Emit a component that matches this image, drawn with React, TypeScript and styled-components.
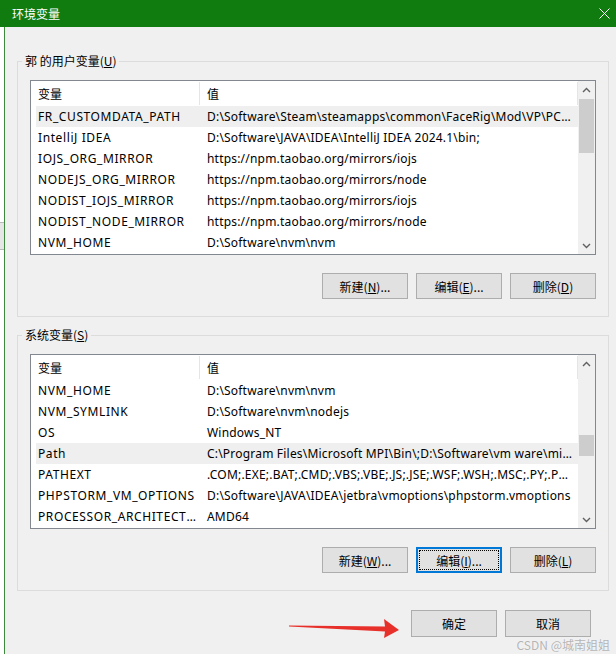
import styled, { createGlobalStyle } from "styled-components";

const GlobalStyle = createGlobalStyle`
	html, body {
		margin: 0;
		background: #ffffff;
	}
	body {
		font-family: "Noto Sans", "Noto Sans CJK SC", sans-serif;
		font-size: 12px;
		color: #000;
	}
`

const Page = styled.div`
	position: relative;
	display: flex;
	flex-direction: column;
	width: 616px;
	height: 654px;
	overflow: hidden;
`
const TitleBar = styled.div`
	flex: none;
	height: 27px;
	display: flex;
	align-items: center;
	justify-content: space-between;
	padding: 0 6px 0 12px;
	background: #107c10;
	color: #fff;
	font-family: "Noto Sans CJK SC", sans-serif;
	font-size: 12px;
`
const Main = styled.div`
	flex: 1;
	display: flex;
	min-height: 0;
	min-width: 0;
`
const Desktop = styled.div`
	flex: none;
	width: 4px;
	display: flex;
	flex-direction: column;
	padding-top: 195px;
`
const DesktopTab = styled.div`
	height: 26px;
	background: #e6e6e6;
	border-top: 1px solid #b9b9b9;
	border-bottom: 1px solid #b9b9b9;
`
const Body = styled.div`
	flex: 1;
	min-width: 0;
	display: flex;
	flex-direction: column;
	border-left: 1px solid #3d8a3d;
	background: #f0f0f0;
	padding: 26px 7px 0 12px;
`
const Group = styled.fieldset<{ $gap?: number }>`
	margin: ${p => p.$gap ?? 0}px 0 0 0;
	padding: 11px 12px 17px 12px;
	border: 1px solid #dcdcdc;
	min-width: 0;
	display: flex;
	flex-direction: column;
`
const Legend = styled.legend`
	padding: 0 3px;
	margin-left: -8px;
	line-height: 16px;
	font-family: "Noto Sans CJK SC", sans-serif;
	font-size: 12px;
`
const ListBox = styled.div`
	height: 175px;
	box-sizing: border-box;
	border: 1px solid #828790;
	background: #fff;
	display: flex;
	min-width: 0;
`
const Table = styled.div`
	flex: 1;
	min-width: 0;
	display: flex;
	flex-direction: column;
`
const HeadRow = styled.div`
	height: 25px;
	display: flex;
	padding-left: 5px;
	flex: none;
`
const HeadCell = styled.div<{ $w?: number; $pad: number }>`
	${p => p.$w ? `width: ${p.$w}px; flex: none;` : 'flex: 1;'}
	box-sizing: border-box;
	padding-left: ${p => p.$pad}px;
	margin: 1px 0 1px 0;
	border-right: 1px solid #e5e5e5;
	display: flex;
	align-items: center;
	font-family: "Noto Sans CJK SC", sans-serif;
`
const Row = styled.div<{ $sel?: boolean }>`
	height: 21px;
	flex: none;
	display: flex;
	align-items: center;
	margin-left: 5px;
	background: ${p => p.$sel ? '#efefef' : 'transparent'};
	white-space: nowrap;
`
const NameCell = styled.div`
	width: 164px;
	flex: none;
	box-sizing: border-box;
	padding: 0 2px 0 2px;
	letter-spacing: 0.6px;
	overflow: hidden;
	text-overflow: ellipsis;
`
const ValueCell = styled.div`
	flex: 1;
	min-width: 0;
	padding: 0 4px 0 7px;
	letter-spacing: 0.2px;
	overflow: hidden;
	text-overflow: ellipsis;
`
const ScrollBar = styled.div`
	width: 17px;
	flex: none;
	background: #f0f0f0;
	display: flex;
	flex-direction: column;
`
const ScrollArrow = styled.div`
	height: 17px;
	flex: none;
	display: flex;
	align-items: center;
	justify-content: center;
`
const Track = styled.div`
	flex: 1;
`
const Thumb = styled.div`
	margin: 0 1px;
	background: #cdcdcd;
`
const ButtonRow = styled.div<{ $top: number; $right?: number }>`
	display: flex;
	justify-content: flex-end;
	gap: 8px;
	margin-top: ${p => p.$top}px;
	margin-right: ${p => p.$right ?? 0}px;
`
const Button = styled.button<{ $h?: number; $focus?: boolean }>`
	width: 86px;
	height: ${p => p.$h ?? 26}px;
	box-sizing: border-box;
	padding: 0;
	background: #e1e1e1;
	border: 1px solid ${p => p.$focus ? '#0078d7' : '#adadad'};
	box-shadow: ${p => p.$focus ? 'inset 0 0 0 1px #0078d7' : 'none'};
	font-family: "Noto Sans CJK SC", sans-serif;
	font-size: 12px;
	color: #000;
	display: flex;
	align-items: center;
	justify-content: center;
`
const FocusRing = styled.span`
	flex: 1;
	align-self: stretch;
	margin: 2px;
	outline: 1px dotted #000;
	outline-offset: -1px;
	display: flex;
	align-items: center;
	justify-content: center;
`
const Arrow = styled.svg`
	position: absolute;
	left: 289px;
	top: 617px;
`
const Watermark = styled.div`
	position: absolute;
	right: 6px;
	bottom: 1px;
	font-family: "Noto Sans CJK SC", sans-serif;
	font-size: 12px;
	color: #b4b4b4;
	text-shadow: 0 0 1px #fff;
`

const Chevron = ({ up }: { up?: boolean }) => (
	<svg width="9" height="6" viewBox="0 0 9 6">
		<polyline
			points={up ? "1,5 4.5,1.5 8,5" : "1,1 4.5,4.5 8,1"}
			fill="none"
			stroke="#606060"
			strokeWidth="1.4"
		/>
	</svg>
)

const userVars = [
	['FR_CUSTOMDATA_PATH', 'D:\\Software\\Steam\\steamapps\\common\\FaceRig\\Mod\\VP\\PC_CustomData'],
	['IntelliJ IDEA', 'D:\\Software\\JAVA\\IDEA\\IntelliJ IDEA 2024.1\\bin;'],
	['IOJS_ORG_MIRROR', 'https://npm.taobao.org/mirrors/iojs'],
	['NODEJS_ORG_MIRROR', 'https://npm.taobao.org/mirrors/node'],
	['NODIST_IOJS_MIRROR', 'https://npm.taobao.org/mirrors/iojs'],
	['NODIST_NODE_MIRROR', 'https://npm.taobao.org/mirrors/node'],
	['NVM_HOME', 'D:\\Software\\nvm\\nvm'],
]

const sysVars = [
	['NVM_HOME', 'D:\\Software\\nvm\\nvm'],
	['NVM_SYMLINK', 'D:\\Software\\nvm\\nodejs'],
	['OS', 'Windows_NT'],
	['Path', 'C:\\Program Files\\Microsoft MPI\\Bin\\;D:\\Software\\vm ware\\mingw64\\bin'],
	['PATHEXT', '.COM;.EXE;.BAT;.CMD;.VBS;.VBE;.JS;.JSE;.WSF;.WSH;.MSC;.PY;.PYW'],
	['PHPSTORM_VM_OPTIONS', 'D:\\Software\\JAVA\\IDEA\\jetbra\\vmoptions\\phpstorm.vmoptions'],
	['PROCESSOR_ARCHITECTURE', 'AMD64'],
]

type VarListProps = { rows: string[][]; selected: number; thumbTop: number; thumbHeight: number }

const VarList = ({ rows, selected, thumbTop, thumbHeight }: VarListProps) => (
	<ListBox>
		<Table>
			<HeadRow>
				<HeadCell $w={164} $pad={2}>变量</HeadCell>
				<HeadCell $pad={7}>值</HeadCell>
			</HeadRow>
			{rows.map(([name, value], i) => (
				<Row key={name} $sel={i === selected}>
					<NameCell>{name}</NameCell>
					<ValueCell>{value}</ValueCell>
				</Row>
			))}
		</Table>
		<ScrollBar>
			<ScrollArrow><Chevron up /></ScrollArrow>
			<Track>
				<Thumb style={{ marginTop: thumbTop, height: thumbHeight }} />
			</Track>
			<ScrollArrow><Chevron /></ScrollArrow>
		</ScrollBar>
	</ListBox>
)

const App = () => {
	return (
		<Page>
			<GlobalStyle />
			<TitleBar>
				环境变量
				<svg width="11" height="11" viewBox="0 0 11 11">
					<path d="M0.5 0.5 L10.5 10.5 M10.5 0.5 L0.5 10.5" stroke="#fff" strokeWidth="1" />
				</svg>
			</TitleBar>
			<Main>
				<Desktop>
					<DesktopTab />
				</Desktop>
				<Body>
					<Group>
						<Legend>郭 的用户变量(<u>U</u>)</Legend>
						<VarList rows={userVars} selected={0} thumbTop={1} thumbHeight={54} />
						<ButtonRow $top={18}>
							<Button>新建(<u>N</u>)...</Button>
							<Button>编辑(<u>E</u>)...</Button>
							<Button>删除(<u>D</u>)</Button>
						</ButtonRow>
					</Group>
					<Group $gap={10}>
						<Legend>系统变量(<u>S</u>)</Legend>
						<VarList rows={sysVars} selected={3} thumbTop={63} thumbHeight={21} />
						<ButtonRow $top={18}>
							<Button>新建(<u>W</u>)...</Button>
							<Button $focus><FocusRing>编辑(<u>I</u>)...</FocusRing></Button>
							<Button>删除(<u>L</u>)</Button>
						</ButtonRow>
					</Group>
					<ButtonRow $top={19} $right={18}>
						<Button $h={27}>确定</Button>
						<Button $h={27}>取消</Button>
					</ButtonRow>
				</Body>
			</Main>
			<Arrow width="112" height="22" viewBox="0 0 112 22">
				<polygon points="0,8.5 96,9.5 95,2 110,13 95,21 96,14.5 0,9.5" fill="#e8302a" />
			</Arrow>
			<Watermark>CSDN @城南姐姐</Watermark>
		</Page>
	)
}

export default App;
